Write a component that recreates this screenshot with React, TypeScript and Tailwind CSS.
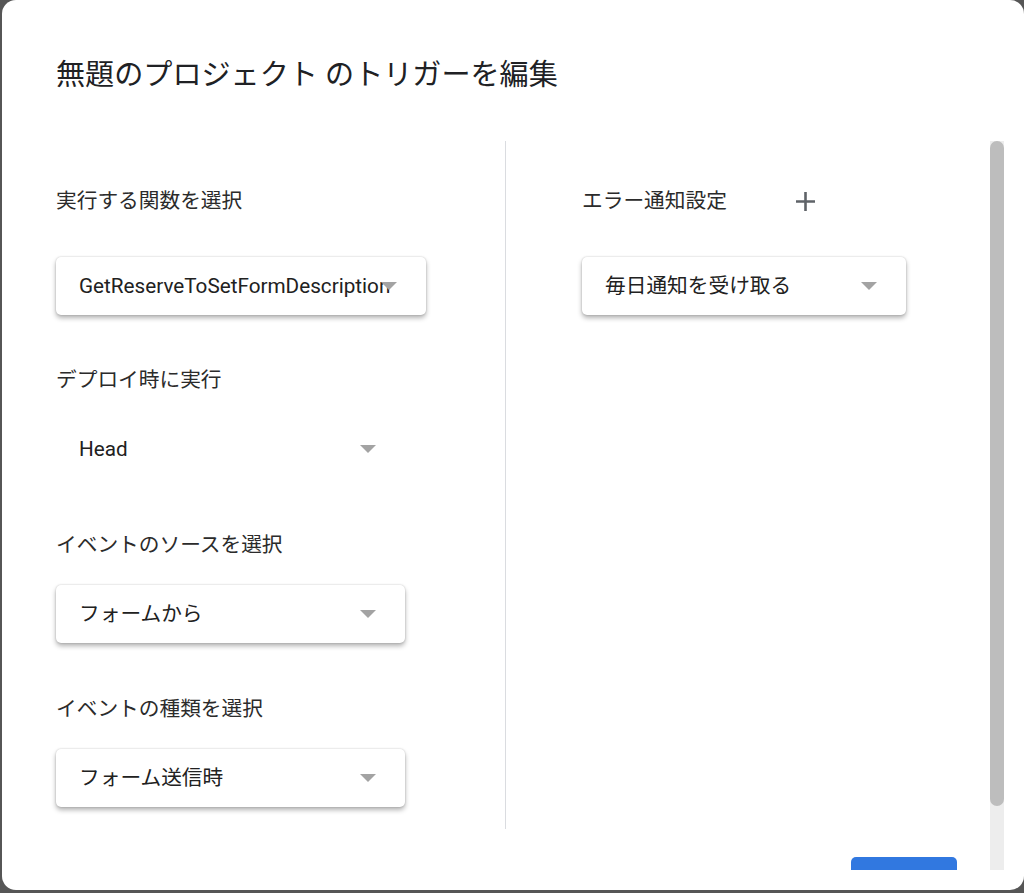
import React from "react";

const FONT = { fontFamily: 'Roboto, "Noto Sans CJK JP", "Noto Sans", sans-serif' };

function Arrow() {
  return (
    <svg width="16" height="8" viewBox="0 0 16 8" className="shrink-0">
      <path d="M0 0 L16 0 L8 8 Z" fill="#a3a3a3" />
    </svg>
  );
}

function Select({ label, width, flat }: { label: string; width: number; flat?: boolean }) {
  return (
    <div
      className={
        "relative flex h-[58px] items-center pl-[23px] " +
        (flat ? "" : "rounded-[5px] bg-white shadow-[0_0_2px_rgba(0,0,0,0.2),0_3px_5px_rgba(0,0,0,0.3)]")
      }
      style={{ width }}
    >
      <span className="whitespace-nowrap text-[20.7px] leading-[28px] text-[#212121]">{label}</span>
      <div className="absolute right-[29px] top-1/2 -translate-y-1/2">
        <Arrow />
      </div>
    </div>
  );
}

function Label({ children }: { children: React.ReactNode }) {
  return <div className="h-[28px] text-[20.7px] leading-[28px] text-[#2b2b2b] whitespace-nowrap">{children}</div>;
}

export default function App() {
  return (
    <div className="h-[893px] w-[1024px] bg-[#565656]" style={FONT}>
      <div className="ml-[2px] flex h-[890px] w-[1022px] flex-col overflow-hidden rounded-[14px] bg-white">
        <div className="pl-[54px] pt-[55px] text-[29.1px] leading-[40px] text-[#202124] whitespace-nowrap">
          無題のプロジェクト のトリガーを編集
        </div>
        <div className="mt-[46px] flex h-[729px] overflow-hidden">
          <div className="flex-1 flex-col pl-[54px] pr-[33px]">
            <div className="flex h-[688px]">
              <div className="flex w-[450px] flex-col border-r border-[#dadce0]">
                <div className="mt-[46px]">
                  <Label>実行する関数を選択</Label>
                </div>
                <div className="mt-[42px]">
                  <Select label="GetReserveToSetFormDescription" width={370} />
                </div>
                <div className="mt-[51px]">
                  <Label>デプロイ時に実行</Label>
                </div>
                <div className="mt-[26px]">
                  <Select label="Head" width={349} flat />
                </div>
                <div className="mt-[53px]">
                  <Label>イベントのソースを選択</Label>
                </div>
                <div className="mt-[26px]">
                  <Select label="フォームから" width={349} />
                </div>
                <div className="mt-[52px]">
                  <Label>イベントの種類を選択</Label>
                </div>
                <div className="mt-[26px]">
                  <Select label="フォーム送信時" width={349} />
                </div>
              </div>
              <div className="flex flex-col pl-[76px]">
                <div className="mt-[46px] flex h-[28px] items-center">
                  <Label>エラー通知設定</Label>
                  <svg width="21" height="21" viewBox="0 0 21 21" className="ml-[68px] mt-[1px]">
                    <path d="M10.5 1 V20 M1 10.5 H20" stroke="#5f6368" strokeWidth="2.6" />
                  </svg>
                </div>
                <div className="mt-[42px]">
                  <Select label="毎日通知を受け取る" width={324} />
                </div>
              </div>
            </div>
            <div className="mt-[28px] flex justify-end">
              <div className="h-[47px] w-[106px] rounded-[5px] bg-[#3178e0]" />
            </div>
          </div>
          <div className="mr-[20px] h-[729px] w-[14px] bg-[#ededed]">
            <div className="h-[665px] w-[14px] rounded-full bg-[#bdbdbd]" />
          </div>
        </div>
      </div>
    </div>
  );
}
